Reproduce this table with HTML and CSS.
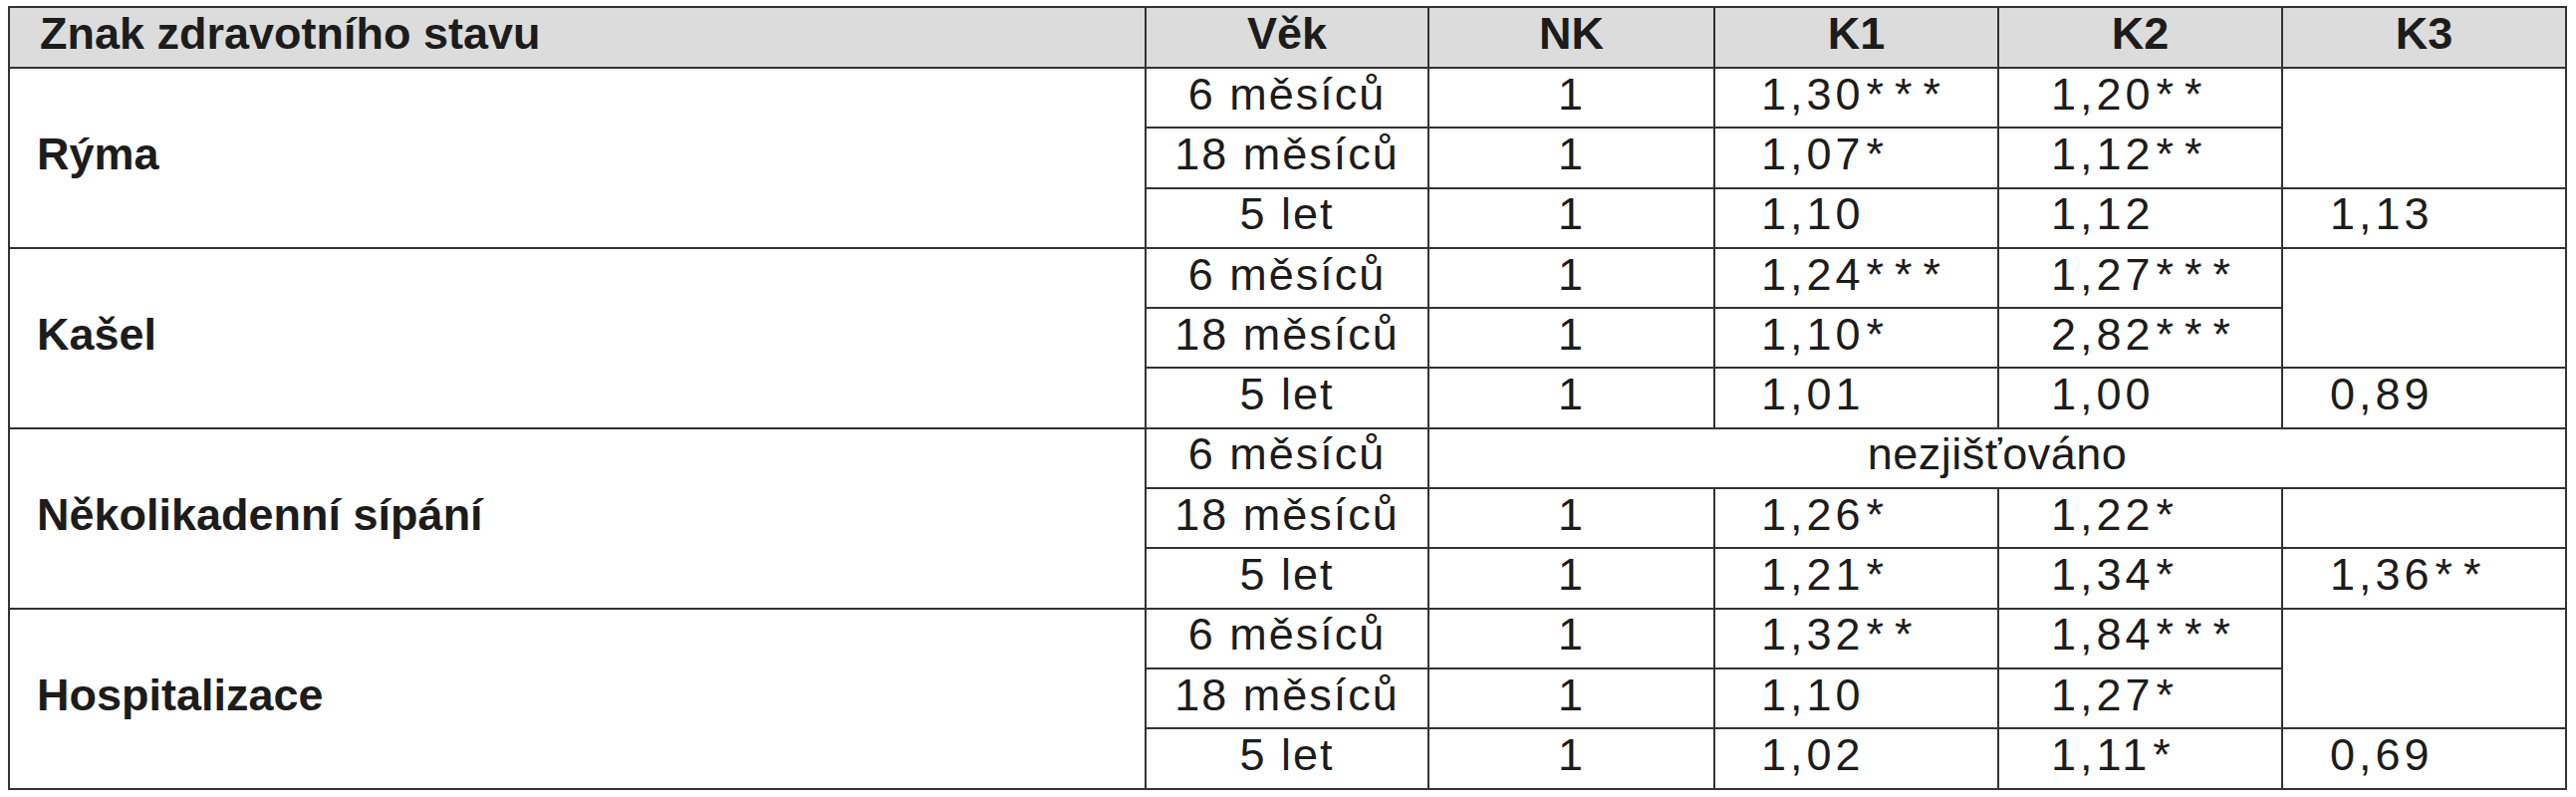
FILE: index.html
```html
<!DOCTYPE html>
<html lang="cs">
<head>
<meta charset="utf-8">
<title>Znak zdravotního stavu</title>
<link rel="stylesheet" href="styles.css">
</head>
<body>
<table class="tbl">
  <colgroup>
    <col class="col-label">
    <col class="col-age">
    <col class="col-nk">
    <col class="col-k">
    <col class="col-k">
    <col class="col-k">
  </colgroup>
  <thead>
    <tr>
      <th class="h-label">Znak zdravotního stavu</th>
      <th>Věk</th>
      <th>NK</th>
      <th>K1</th>
      <th>K2</th>
      <th>K3</th>
    </tr>
  </thead>
  <tbody>
    <tr>
      <td class="label" rowspan="3">Rýma</td>
      <td class="age">6 měsíců</td>
      <td class="nk">1</td>
      <td class="v k1">1,30<span class="ast">***</span></td>
      <td class="v k2">1,20<span class="ast">**</span></td>
      <td class="v k3" rowspan="2"></td>
    </tr>
    <tr>
      <td class="age">18 měsíců</td>
      <td class="nk">1</td>
      <td class="v k1">1,07<span class="ast">*</span></td>
      <td class="v k2">1,12<span class="ast">**</span></td>
    </tr>
    <tr>
      <td class="age">5 let</td>
      <td class="nk">1</td>
      <td class="v k1">1,10</td>
      <td class="v k2">1,12</td>
      <td class="v k3">1,13</td>
    </tr>
  </tbody>
  <tbody>
    <tr>
      <td class="label" rowspan="3">Kašel</td>
      <td class="age">6 měsíců</td>
      <td class="nk">1</td>
      <td class="v k1">1,24<span class="ast">***</span></td>
      <td class="v k2">1,27<span class="ast">***</span></td>
      <td class="v k3" rowspan="2"></td>
    </tr>
    <tr>
      <td class="age">18 měsíců</td>
      <td class="nk">1</td>
      <td class="v k1">1,10<span class="ast">*</span></td>
      <td class="v k2">2,82<span class="ast">***</span></td>
    </tr>
    <tr>
      <td class="age">5 let</td>
      <td class="nk">1</td>
      <td class="v k1">1,01</td>
      <td class="v k2">1,00</td>
      <td class="v k3">0,89</td>
    </tr>
  </tbody>
  <tbody>
    <tr>
      <td class="label" rowspan="3">Několikadenní sípání</td>
      <td class="age">6 měsíců</td>
      <td class="na" colspan="4">nezjišťováno</td>
    </tr>
    <tr>
      <td class="age">18 měsíců</td>
      <td class="nk">1</td>
      <td class="v k1">1,26<span class="ast">*</span></td>
      <td class="v k2">1,22<span class="ast">*</span></td>
      <td class="v k3"></td>
    </tr>
    <tr>
      <td class="age">5 let</td>
      <td class="nk">1</td>
      <td class="v k1">1,21<span class="ast">*</span></td>
      <td class="v k2">1,34<span class="ast">*</span></td>
      <td class="v k3">1,36<span class="ast">**</span></td>
    </tr>
  </tbody>
  <tbody>
    <tr>
      <td class="label" rowspan="3">Hospitalizace</td>
      <td class="age">6 měsíců</td>
      <td class="nk">1</td>
      <td class="v k1">1,32<span class="ast">**</span></td>
      <td class="v k2">1,84<span class="ast">***</span></td>
      <td class="v k3" rowspan="2"></td>
    </tr>
    <tr>
      <td class="age">18 měsíců</td>
      <td class="nk">1</td>
      <td class="v k1">1,10</td>
      <td class="v k2">1,27<span class="ast">*</span></td>
    </tr>
    <tr>
      <td class="age">5 let</td>
      <td class="nk">1</td>
      <td class="v k1">1,02</td>
      <td class="v k2">1,11<span class="ast">*</span></td>
      <td class="v k3">0,69</td>
    </tr>
  </tbody>
</table>
</body>
</html>
```
FILE: styles.css
```css
html, body {
  background: #ffffff;
}
body {
  margin: 6px 0 0 8px;
  font-family: "Liberation Sans", Arial, sans-serif;
  color: #1c1c1c;
}
.tbl {
  border-collapse: collapse;
  table-layout: fixed;
  width: 2567px;
  font-size: 45px;
}
.col-label { width: 1141px; }
.col-age { width: 284px; }
.col-nk { width: 287px; }
.col-k { width: 285px; }

.tbl th,
.tbl td {
  border: 2px solid #333333;
  height: 60.3px;
  padding: 0 0 7px 0;
  box-sizing: border-box;
  vertical-align: middle;
  line-height: 48px;
  white-space: nowrap;
}
.tbl th {
  height: 61px;
  background: #dcdcdc;
  font-weight: bold;
  text-align: center;
}
.tbl th.h-label {
  text-align: left;
  padding-left: 30px;
}
.tbl td.label {
  font-weight: bold;
  padding-left: 27px;
  text-align: left;
}
.tbl td.age,
.tbl td.nk {
  text-align: center;
  letter-spacing: 2px;
}
.tbl td.na {
  text-align: center;
  letter-spacing: 0.5px;
}
.tbl td.v {
  text-align: left;
  letter-spacing: 4px;
}
.tbl td.k1 { padding-left: 46px; }
.tbl td.k2 { padding-left: 52px; }
.tbl td.k3 { padding-left: 47px; }
.ast {
  letter-spacing: 11px;
  margin-left: 2px;
}
```
